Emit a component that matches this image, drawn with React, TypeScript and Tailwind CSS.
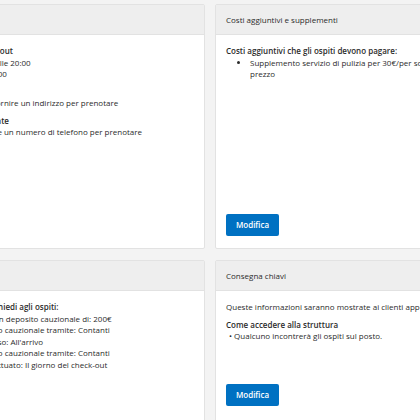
import React from 'react';

const Card: React.FC<{ title: string; tall?: boolean; children: React.ReactNode }> = ({ title, tall, children }) => (
  <div className={`flex flex-col rounded-[2px] border border-[#e2e2e2] bg-white ${tall ? 'h-[245px] pb-[12px]' : 'h-[162px] pb-[15px]'}`}>
    <div className="flex h-[30px] shrink-0 items-center border-b border-[#e2e2e2] bg-[#eeeeee] px-[10px]">{title}</div>
    <div className="flex flex-1 flex-col px-[10px] pt-[10px] leading-[11.5px]">
      {children}
      <button className="mt-auto h-[22px] w-[53px] rounded-[2px] bg-[#0071c2] font-semibold text-white">Modifica</button>
    </div>
  </div>
);

export default function App() {
  return (
    <div className="h-[420px] w-[420px] overflow-hidden bg-[#f3f3f3] font-['Open_Sans',sans-serif] text-[8px] text-[#2b2b2b]">
      <div className="ml-[-99px] grid grid-cols-[304px_321px] gap-x-[10px] gap-y-[11px] pt-[4px]">
        <Card title="Orari e informazioni" tall>
          <p className="font-semibold">Orari check-in e check-out</p>
          <p>Check-in: dalle 14:00 - alle 20:00</p>
          <p>Check-out: sino alle 11:00</p>
          <p className="mt-[6px] font-semibold">Indirizzo</p>
          <p>Gli ospiti non devono fornire un indirizzo per prenotare</p>
          <p className="mt-[6px] font-semibold">Recapiti telefonici cliente</p>
          <p>Gli ospiti devono fornire un numero di telefono per prenotare</p>
        </Card>
        <Card title="Costi aggiuntivi e supplementi" tall>
          <p className="font-semibold">Costi aggiuntivi che gli ospiti devono pagare:</p>
          <ul className="list-disc pl-[24px]">
            <li>Supplemento servizio di pulizia per 30€/per soggiorno, non incluso nel prezzo</li>
          </ul>
        </Card>
        <Card title="Deposito cauzionale">
          <p className="font-semibold">Deposito danni che richiedi agli ospiti:</p>
          <p>Gli ospiti pagheranno un deposito cauzionale di: 200€</p>
          <p>Pagamento del deposito cauzionale tramite: Contanti</p>
          <p>Quando sarà poi riscosso: All'arrivo</p>
          <p>Riconsegna del deposito cauzionale tramite: Contanti</p>
          <p>Il rimborso ti viene effettuato: Il giorno del check-out</p>
        </Card>
        <Card title="Consegna chiavi">
          <p>Queste informazioni saranno mostrate ai clienti appena avranno prenotato.</p>
          <p className="mt-[6px] font-semibold">Come accedere alla struttura</p>
          <p className="pl-[3px]">• Qualcuno incontrerà gli ospiti sul posto.</p>
        </Card>
      </div>
    </div>
  );
}
